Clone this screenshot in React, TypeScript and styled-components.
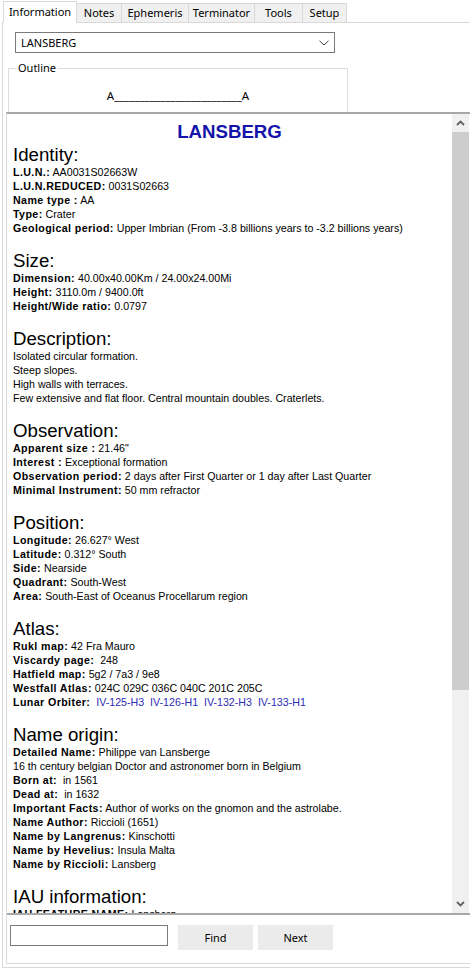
import React from "react";
import styled, { createGlobalStyle } from "styled-components";

const GlobalStyle = createGlobalStyle`
  html, body { margin: 0; padding: 0; background: #ffffff; }
  body {
    width: 470px; height: 970px; overflow: hidden;
    font-family: "Noto Sans", "Liberation Sans", sans-serif;
    color: #000;
  }
  #root { width: 470px; height: 970px; }
  * { box-sizing: border-box; }
`;

const Window = styled.div`
  width: 470px;
  height: 970px;
  display: flex;
  flex-direction: column;
  background: #fff;
`;

const TabStrip = styled.div`
  display: flex;
  align-items: flex-end;
  height: 22px;
  padding-left: 3px;
  position: relative;
  z-index: 2;
  flex: none;
`;

const Tab = styled.div<{ $active?: boolean; $w: number }>`
  width: ${(p) => p.$w}px;
  height: ${(p) => (p.$active ? 22 : 19)}px;
  margin-bottom: ${(p) => (p.$active ? -1 : 0)}px;
  background: ${(p) => (p.$active ? "#ffffff" : "#f0f0f0")};
  border: 1px solid #d9d9d9;
  border-bottom: none;
  border-left: ${(p) => (p.$active ? "1px solid #d9d9d9" : "none")};
  font-size: 11px;
  line-height: ${(p) => (p.$active ? 20 : 18)}px;
  text-align: center;
  color: #000;
  white-space: nowrap;
`;

const Panel = styled.div`
  flex: 1;
  margin-left: 2px;
  margin-bottom: 2px;
  border-top: 1px solid #d9d9d9;
  border-left: 1px solid #d9d9d9;
  border-bottom: 1px solid #d9d9d9;
  display: flex;
  flex-direction: column;
  min-height: 0;
`;

const Combo = styled.div`
  margin: 9px 0 0 12px;
  width: 320px;
  height: 21px;
  border: 1px solid #7a7a7a;
  background: #fff;
  display: flex;
  align-items: center;
  justify-content: space-between;
  padding: 0 5px 0 5px;
  font-size: 11px;
  flex: none;
`;

const GroupBox = styled.fieldset`
  margin: 8px 0 0 5px;
  width: 340px;
  height: 51px;
  border: 1px solid #dcdcdc;
  border-bottom: none;
  padding: 0 7px;
  min-width: 0;
  flex: none;
`;

const Legend = styled.legend`
  padding: 0 2px;
  font-size: 11px;
  line-height: 14px;
  margin-left: 0;
`;

const OutlineText = styled.div`
  text-align: center;
  font-size: 11.5px;
  line-height: 14px;
  padding-top: 14px;
  white-space: pre;
`;

const Inner = styled.div`
  flex: 1;
  margin-left: 3px;
  margin-bottom: 3px;
  border-top: 2px solid #a8a8a8;
  border-left: 1px solid #dadada;
  border-bottom: 1px solid #d9d9d9;
  display: flex;
  flex-direction: column;
  min-height: 0;
`;

const RichRow = styled.div`
  flex: 1;
  display: flex;
  min-height: 0;
  border-bottom: 2px solid #a8a8a8;
`;

const Content = styled.div`
  flex: 1;
  overflow: hidden;
  padding: 5px 6px 0 6px;
  font-family: "Liberation Sans", Arial, sans-serif;
`;

const Title = styled.div`
  font-weight: bold;
  font-size: 18.67px;
  line-height: 26px;
  text-align: center;
  color: #1414aa;
`;

const Heading = styled.div<{ $first?: boolean }>`
  font-size: 18.67px;
  line-height: 20px;
  margin-top: ${(p) => (p.$first ? 0 : 16)}px;
  white-space: nowrap;
`;

const Line = styled.div`
  font-size: 10.67px;
  line-height: 14px;
  white-space: pre;
`;

const Label = styled.b`
  font-weight: bold;
  letter-spacing: 0.4px;
`;

const Link = styled.span`
  color: #2c2cb4;
`;

const ScrollBar = styled.div`
  width: 17px;
  margin-right: 1px;
  background: #f0f0f0;
  display: flex;
  flex-direction: column;
  flex: none;
`;

const ScrollButton = styled.div`
  height: 18px;
  display: flex;
  align-items: center;
  justify-content: center;
  flex: none;
`;

const Thumb = styled.div`
  height: 558px;
  background: #cdcdcd;
  flex: none;
`;

const Track = styled.div`
  flex: 1;
`;

const BottomBar = styled.div`
  height: 48px;
  flex: none;
  display: flex;
  align-items: flex-start;
  padding: 10px 0 0 3px;
`;

const SearchInput = styled.input`
  width: 158px;
  height: 21px;
  border: 1px solid #7a7a7a;
  margin: 0;
  padding: 0 3px;
  font-family: "Noto Sans", sans-serif;
  font-size: 11px;
  outline: none;
`;

const Button = styled.button<{ $gap: number }>`
  margin-left: ${(p) => p.$gap}px;
  width: 75px;
  height: 25px;
  border: none;
  background: #ebebeb;
  font-family: "Noto Sans", sans-serif;
  font-size: 11px;
  color: #000;
  padding: 0;
`;

type Item = { label?: string; value?: string; links?: string[] };
type Section = { title: string; items: Item[] };

const sections: Section[] = [
  {
    title: "Identity:",
    items: [
      { label: "L.U.N.:", value: " AA0031S02663W" },
      { label: "L.U.N.REDUCED:", value: " 0031S02663" },
      { label: "Name type :", value: " AA" },
      { label: "Type:", value: " Crater" },
      { label: "Geological period:", value: " Upper Imbrian (From -3.8 billions years to -3.2 billions years)" },
    ],
  },
  {
    title: "Size:",
    items: [
      { label: "Dimension:", value: " 40.00x40.00Km / 24.00x24.00Mi" },
      { label: "Height:", value: " 3110.0m / 9400.0ft" },
      { label: "Height/Wide ratio:", value: " 0.0797" },
    ],
  },
  {
    title: "Description:",
    items: [
      { value: "Isolated circular formation." },
      { value: "Steep slopes." },
      { value: "High walls with terraces." },
      { value: "Few extensive and flat floor. Central mountain doubles. Craterlets." },
    ],
  },
  {
    title: "Observation:",
    items: [
      { label: "Apparent size :", value: ' 21.46"' },
      { label: "Interest :", value: " Exceptional formation" },
      { label: "Observation period:", value: " 2 days after First Quarter or 1 day after Last Quarter" },
      { label: "Minimal Instrument:", value: " 50 mm refractor" },
    ],
  },
  {
    title: "Position:",
    items: [
      { label: "Longitude:", value: " 26.627° West" },
      { label: "Latitude:", value: " 0.312° South" },
      { label: "Side:", value: " Nearside" },
      { label: "Quadrant:", value: " South-West" },
      { label: "Area:", value: " South-East of Oceanus Procellarum region" },
    ],
  },
  {
    title: "Atlas:",
    items: [
      { label: "Rukl map:", value: " 42 Fra Mauro" },
      { label: "Viscardy page:", value: "  248" },
      { label: "Hatfield map:", value: " 5g2 / 7a3 / 9e8" },
      { label: "Westfall Atlas:", value: " 024C 029C 036C 040C 201C 205C" },
      { label: "Lunar Orbiter:", links: ["IV-125-H3", "IV-126-H1", "IV-132-H3", "IV-133-H1"] },
    ],
  },
  {
    title: "Name origin:",
    items: [
      { label: "Detailed Name:", value: " Philippe van Lansberge" },
      { value: "16 th century belgian Doctor and astronomer born in Belgium" },
      { label: "Born at:", value: "  in 1561" },
      { label: "Dead at:", value: "  in 1632" },
      { label: "Important Facts:", value: " Author of works on the gnomon and the astrolabe." },
      { label: "Name Author:", value: " Riccioli (1651)" },
      { label: "Name by Langrenus:", value: " Kinschotti" },
      { label: "Name by Hevelius:", value: " Insula Malta" },
      { label: "Name by Riccioli:", value: " Lansberg" },
    ],
  },
  {
    title: "IAU information:",
    items: [
      { label: "IAU FEATURE NAME:", value: " Lansberg" },
      { label: "IAU CLEAN NAME:", value: " Lansberg" },
      { label: "IAU FEATURE ID:", value: " 3184" },
    ],
  },
];

const tabs: { name: string; w: number }[] = [
  { name: "Information", w: 74 },
  { name: "Notes", w: 45 },
  { name: "Ephemeris", w: 67 },
  { name: "Terminator", w: 66 },
  { name: "Tools", w: 48 },
  { name: "Setup", w: 44 },
];

const Chevron = ({ dir }: { dir: "up" | "down" }) => (
  <svg width="9" height="6" viewBox="0 0 9 6">
    <polyline
      points={dir === "up" ? "1,5 4.5,1.5 8,5" : "1,1 4.5,4.5 8,1"}
      fill="none"
      stroke="#606060"
      strokeWidth="1.8"
    />
  </svg>
);

const ComboArrow = () => (
  <svg width="10" height="6" viewBox="0 0 10 6">
    <polyline points="0.5,0.8 5,5 9.5,0.8" fill="none" stroke="#404040" strokeWidth="1" />
  </svg>
);

export default function App() {
  return (
    <Window>
      <GlobalStyle />
      <TabStrip>
        {tabs.map((t, i) => (
          <Tab key={t.name} $active={i === 0} $w={t.w}>
            {t.name}
          </Tab>
        ))}
      </TabStrip>
      <Panel>
        <Combo>
          <span>LANSBERG</span>
          <ComboArrow />
        </Combo>
        <GroupBox>
          <Legend>Outline</Legend>
          <OutlineText>{"A" + "_".repeat(25) + "A"}</OutlineText>
        </GroupBox>
        <Inner>
          <RichRow>
            <Content>
              <Title>LANSBERG</Title>
              {sections.map((s, si) => (
                <React.Fragment key={s.title}>
                  <Heading $first={si === 0}>{s.title}</Heading>
                  {s.items.map((it, ii) => (
                    <Line key={ii}>
                      {it.label && <Label>{it.label}</Label>}
                      {it.value}
                      {it.links &&
                        it.links.map((l) => (
                          <React.Fragment key={l}>
                            {"  "}
                            <Link>{l}</Link>
                          </React.Fragment>
                        ))}
                    </Line>
                  ))}
                </React.Fragment>
              ))}
            </Content>
            <ScrollBar>
              <ScrollButton>
                <Chevron dir="up" />
              </ScrollButton>
              <Thumb />
              <Track />
              <ScrollButton>
                <Chevron dir="down" />
              </ScrollButton>
            </ScrollBar>
          </RichRow>
          <BottomBar>
            <SearchInput type="text" />
            <Button $gap={10}>Find</Button>
            <Button $gap={5}>Next</Button>
          </BottomBar>
        </Inner>
      </Panel>
    </Window>
  );
}
